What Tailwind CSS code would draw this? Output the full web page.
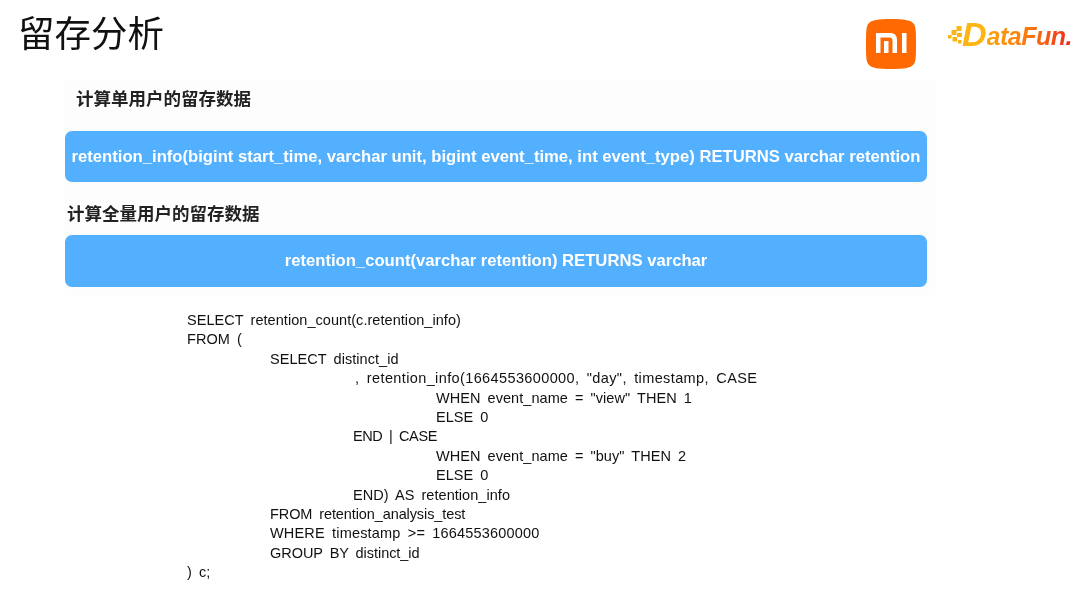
<!DOCTYPE html>
<html lang="zh-CN">
<head>
<meta charset="UTF-8">
<title>留存分析</title>
<script src="https://cdn.jsdelivr.net/npm/@tailwindcss/browser@4"></script>
</head>
<body class="w-[1080px] h-[604px] overflow-hidden bg-white text-black blur-[0.4px] font-['Liberation_Sans','Noto_Sans_CJK_SC',sans-serif]">
  <header class="flex items-start h-[80px]">
    <h1 class="ml-[18px] mt-[15px] text-[36.500px] leading-[40px] font-normal text-[#111] flex-1">留存分析</h1>
    <svg class="mt-[19px] w-[50px] h-[50px]" viewBox="0 0 50 50">
      <path d="M25 0C38 0 44 1 47 4C50 7 50 13 50 25C50 37 50 43 47 46C44 49 38 50 25 50C12 50 6 49 3 46C0 43 0 37 0 25C0 13 0 7 3 4C6 1 12 0 25 0Z" fill="#ff6900"/>
      <path d="M10 14H24C28.500 14 31 16.500 31 21V34H26.500V22C26.500 19.500 25.500 18.500 23.500 18.500H14.500V34H10Z" fill="#fff"/>
      <rect x="18" y="22" width="4.500" height="12" fill="#fff"/>
      <rect x="36" y="14" width="4.500" height="20" fill="#fff"/>
    </svg>
    <div class="ml-[32px] mr-[8px] mt-[15px] w-[124px] h-[38px] flex items-end">
      <svg class="w-[14px] h-[20px] mb-[7px] shrink-0" viewBox="0 0 14 20" fill="#fbb514">
        <rect x="8.500" y="0" width="5" height="5"/><rect x="3.500" y="4" width="5" height="5"/><rect x="9" y="7" width="5" height="4"/><rect x="0" y="9" width="3.500" height="3.500"/><rect x="4.500" y="11" width="4.500" height="4.500"/><rect x="10" y="14" width="3.500" height="3.500"/>
      </svg>
      <span class="text-[34px] leading-[38px] font-bold italic text-[#fdb515]">D</span>
      <span class="text-[25px] leading-[34px] font-bold italic tracking-[-0.5px] bg-gradient-to-r from-[#fca40f] via-[#f9750f] to-[#ef1c1c] bg-clip-text text-transparent">ataFun.</span>
    </div>
  </header>
  <main class="mx-[65px] w-[870px] h-[215px] bg-[#fdfdfd]">
    <h2 class="pl-[11px] pt-[9px] text-[17.500px] leading-[20px] font-bold text-[#222]">计算单用户的留存数据</h2>
    <div class="mt-[22px] w-[862px] h-[51px] rounded-[7px] bg-[#52b0ff] flex items-center justify-center text-white text-[16.650px] pt-[1px] font-bold whitespace-nowrap">retention_info(bigint start_time, varchar unit, bigint event_time, int event_type) RETURNS varchar retention</div>
    <h2 class="pl-[2px] mt-[22px] text-[17.500px] leading-[20px] font-bold text-[#222]">计算全量用户的留存数据</h2>
    <div class="mt-[11px] w-[862px] h-[52px] rounded-[7px] bg-[#52b0ff] flex items-center justify-center text-white text-[16.650px] pt-[1px] font-bold whitespace-nowrap">retention_count(varchar retention) RETURNS varchar</div>
  </main>
  <section class="mt-[16px] ml-[187px] text-[14.500px] leading-[19.400px] text-[#111] whitespace-nowrap tracking-[0.05px] [word-spacing:3px]">
    <div>SELECT retention_count(c.retention_info)</div>
    <div>FROM (</div>
    <div class="pl-[83px]">SELECT distinct_id</div>
    <div class="pl-[168px] tracking-[0.38px]">, retention_info(1664553600000, "day", timestamp, CASE</div>
    <div class="pl-[249px]">WHEN event_name = "view" THEN 1</div>
    <div class="pl-[249px]">ELSE 0</div>
    <div class="pl-[166px] tracking-[-0.4px]">END | CASE</div>
    <div class="pl-[249px]">WHEN event_name = "buy" THEN 2</div>
    <div class="pl-[249px]">ELSE 0</div>
    <div class="pl-[166px]">END) AS retention_info</div>
    <div class="pl-[83px] tracking-[-0.1px]">FROM retention_analysis_test</div>
    <div class="pl-[83px] tracking-[0.18px]">WHERE timestamp &gt;= 1664553600000</div>
    <div class="pl-[83px] tracking-[-0.05px]">GROUP BY distinct_id</div>
    <div>) c;</div>
  </section>
</body>
</html>
